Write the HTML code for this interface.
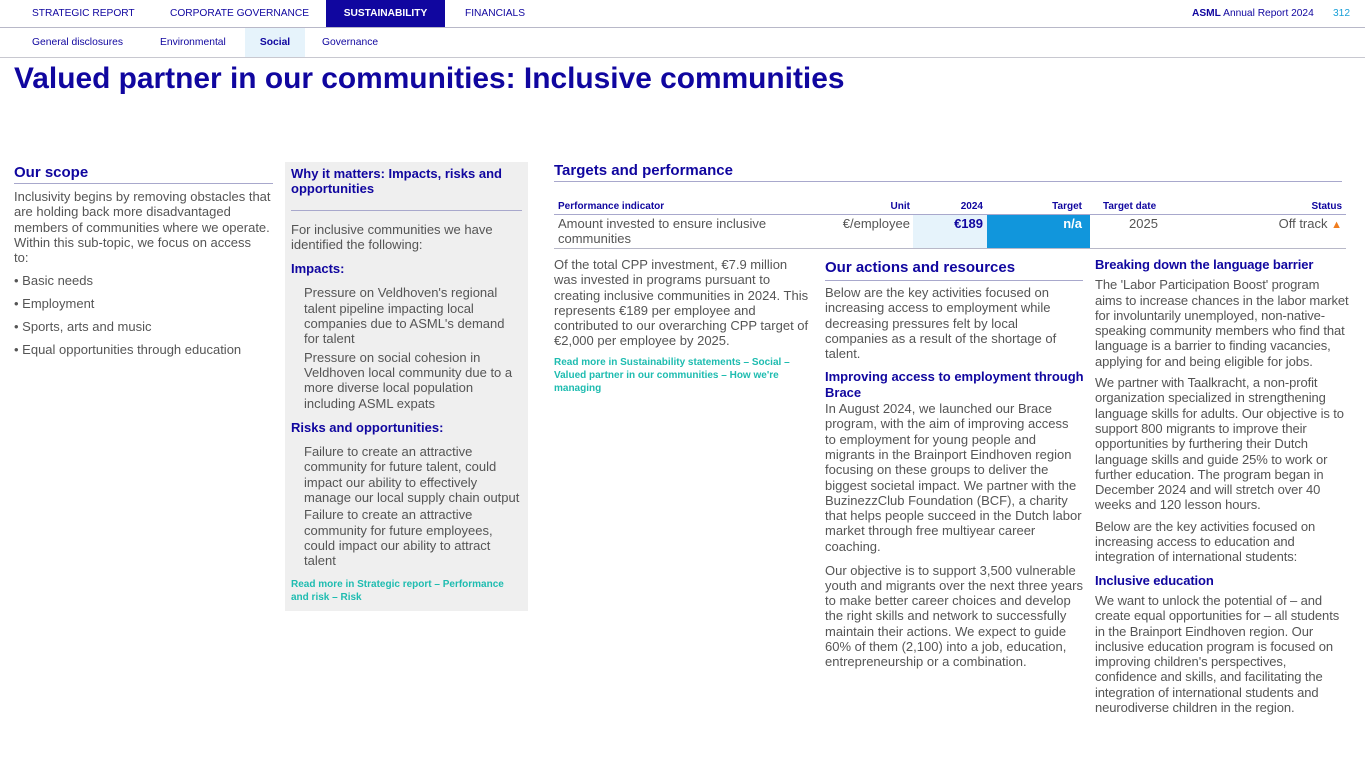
<!DOCTYPE html>
<html><head><meta charset="utf-8"><style>
*{margin:0;padding:0;box-sizing:border-box}
body{width:1365px;height:769px;overflow:hidden;background:#fff;font-family:"Liberation Sans",sans-serif;color:#555;font-size:13px;line-height:15.3px;position:relative}
.a{position:absolute}
p,div{white-space:nowrap}
.nav{height:28px;border-bottom:1px solid #b8b8c8}
.nav span{position:absolute;top:0;height:27px;line-height:28px;font-size:10.2px;color:#10069f}
.sub{top:28px;height:30px;width:1365px;border-bottom:1px solid #c8c8d0}
.sub span{position:absolute;top:0;height:29px;line-height:30px;font-size:10.3px;color:#10069f}
h1{position:absolute;left:14px;top:61px;font-size:29.9px;line-height:36px;color:#10069f;font-weight:bold;white-space:nowrap}
.h{color:#10069f;font-weight:bold}
.h2{color:#10069f;font-weight:bold;font-size:15px;line-height:18px}
.ln{border-bottom:1px solid #a8a8cc}
.lk{color:#1ebcb0;font-weight:bold;font-size:10px;line-height:13px}
p{margin:0}
.c3 p{letter-spacing:-0.1px}
</style></head><body>
<div class="nav">
<span style="left:32px">STRATEGIC REPORT</span>
<span style="left:170px">CORPORATE GOVERNANCE</span>
<span style="left:326px;width:119px;background:#10069f;color:#fff;font-weight:bold;text-align:center">SUSTAINABILITY</span>
<span style="left:465px">FINANCIALS</span>
<span style="left:1192px"><b>ASML</b> Annual Report 2024</span>
<span style="left:1333px;color:#1aa0d8">312</span>
</div>
<div class="a sub">
<span style="left:32px">General disclosures</span>
<span style="left:160px">Environmental</span>
<span style="left:245px;width:60px;background:#e6f3fb;font-weight:bold;text-align:center">Social</span>
<span style="left:322px">Governance</span>
</div>
<h1>Valued partner in our communities: Inclusive communities</h1>

<div class="a" style="left:14px;top:164px;width:259px">
<div class="h2 ln" style="padding-bottom:1px">Our scope</div>
<p style="margin-top:5px">Inclusivity begins by removing obstacles that<br>are holding back more disadvantaged<br>members of communities where we operate.<br>Within this sub-topic, we focus on access<br>to:</p>
<p style="margin-top:7.7px">• Basic needs</p>
<p style="margin-top:7.7px">• Employment</p>
<p style="margin-top:7.7px">• Sports, arts and music</p>
<p style="margin-top:7.7px">• Equal opportunities through education</p>
</div>

<div class="a" style="left:285px;top:162px;width:243px;height:449px;background:#efefef;padding:4px 6px 0 6px">
<div class="h ln" style="padding-bottom:13px">Why it matters: Impacts, risks and<br>opportunities</div>
<p style="margin-top:11px">For inclusive communities we have<br>identified the following:</p>
<p class="h" style="margin-top:9px">Impacts:</p>
<p style="margin-top:9px;padding-left:13px">Pressure on Veldhoven's regional<br>talent pipeline impacting local<br>companies due to ASML's demand<br>for talent</p>
<p style="margin-top:3px;padding-left:13px">Pressure on social cohesion in<br>Veldhoven local community due to a<br>more diverse local population<br>including ASML expats</p>
<p class="h" style="margin-top:9px">Risks and opportunities:</p>
<p style="margin-top:9px;padding-left:13px">Failure to create an attractive<br>community for future talent, could<br>impact our ability to effectively<br>manage our local supply chain output</p>
<p style="margin-top:2px;padding-left:13px">Failure to create an attractive<br>community for future employees,<br>could impact our ability to attract<br>talent</p>
<p class="lk" style="margin-top:9px">Read more in Strategic report – Performance<br>and risk – Risk</p>
</div>

<div class="a h2 ln" style="left:554px;top:162px;width:788px;padding-bottom:1px">Targets and performance</div>
<div class="a" style="left:913px;top:215px;width:74px;height:33px;background:#e6f3fb"></div>
<div class="a" style="left:987px;top:215px;width:103px;height:33px;background:#1196dc"></div>
<div class="a" style="left:554px;top:200px;width:792px;height:15px;border-bottom:1px solid #a8a8cc;font-size:10px;font-weight:bold;color:#10069f;line-height:14px">
<span class="a" style="left:4px">Performance indicator</span>
<span class="a" style="right:436px">Unit</span>
<span class="a" style="right:363px">2024</span>
<span class="a" style="right:264px">Target</span>
<span class="a" style="left:549px">Target date</span>
<span class="a" style="right:4px">Status</span>
</div>
<div class="a" style="left:554px;top:215px;width:792px;height:34px;border-bottom:1px solid #b8b8c8">
<span class="a" style="left:4px;top:1px;white-space:nowrap">Amount invested to ensure inclusive<br>communities</span>
<span class="a" style="right:436px;top:1px">€/employee</span>
<span class="a h" style="right:363px;top:1px">€189</span>
<span class="a h" style="right:264px;top:1px;color:#fff">n/a</span>
<span class="a" style="left:575px;top:1px">2025</span>
<span class="a" style="right:4px;top:1px;white-space:nowrap">Off track <span style="color:#f07d1e;font-size:11px">▲</span></span>
</div>

<div class="a" style="left:554px;top:257px;width:258px">
<p>Of the total CPP investment, €7.9 million<br>was invested in programs pursuant to<br>creating inclusive communities in 2024. This<br>represents €189 per employee and<br>contributed to our overarching CPP target of<br>€2,000 per employee by 2025.</p>
<p class="lk" style="margin-top:7px">Read more in Sustainability statements – Social –<br>Valued partner in our communities – How we're<br>managing</p>
</div>

<div class="a" style="left:825px;top:259px;width:258px">
<div class="h2 ln" style="padding-bottom:3px">Our actions and resources</div>
<p style="margin-top:4px">Below are the key activities focused on<br>increasing access to employment while<br>decreasing pressures felt by local<br>companies as a result of the shortage of<br>talent.</p>
<p class="h" style="margin-top:8px">Improving access to employment through<br>Brace</p>
<p style="margin-top:1px">In August 2024, we launched our Brace<br>program, with the aim of improving access<br>to employment for young people and<br>migrants in the Brainport Eindhoven region<br>focusing on these groups to deliver the<br>biggest societal impact. We partner with the<br>BuzinezzClub Foundation (BCF), a charity<br>that helps people succeed in the Dutch labor<br>market through free multiyear career<br>coaching.</p>
<p style="margin-top:8.5px">Our objective is to support 3,500 vulnerable<br>youth and migrants over the next three years<br>to make better career choices and develop<br>the right skills and network to successfully<br>maintain their actions. We expect to guide<br>60% of them (2,100) into a job, education,<br>entrepreneurship or a combination.</p>
</div>

<div class="a c3" style="left:1095px;top:257px;width:260px">
<p class="h">Breaking down the language barrier</p>
<p style="margin-top:5px">The 'Labor Participation Boost' program<br>aims to increase chances in the labor market<br>for involuntarily unemployed, non-native-<br>speaking community members who find that<br>language is a barrier to finding vacancies,<br>applying for and being eligible for jobs.</p>
<p style="margin-top:6px">We partner with Taalkracht, a non-profit<br>organization specialized in strengthening<br>language skills for adults. Our objective is to<br>support 800 migrants to improve their<br>opportunities by furthering their Dutch<br>language skills and guide 25% to work or<br>further education. The program began in<br>December 2024 and will stretch over 40<br>weeks and 120 lesson hours.</p>
<p style="margin-top:6px">Below are the key activities focused on<br>increasing access to education and<br>integration of international students:</p>
<p class="h" style="margin-top:8px">Inclusive education</p>
<p style="margin-top:5px">We want to unlock the potential of – and<br>create equal opportunities for – all students<br>in the Brainport Eindhoven region. Our<br>inclusive education program is focused on<br>improving children's perspectives,<br>confidence and skills, and facilitating the<br>integration of international students and<br>neurodiverse children in the region.</p>
</div>
</body></html>
